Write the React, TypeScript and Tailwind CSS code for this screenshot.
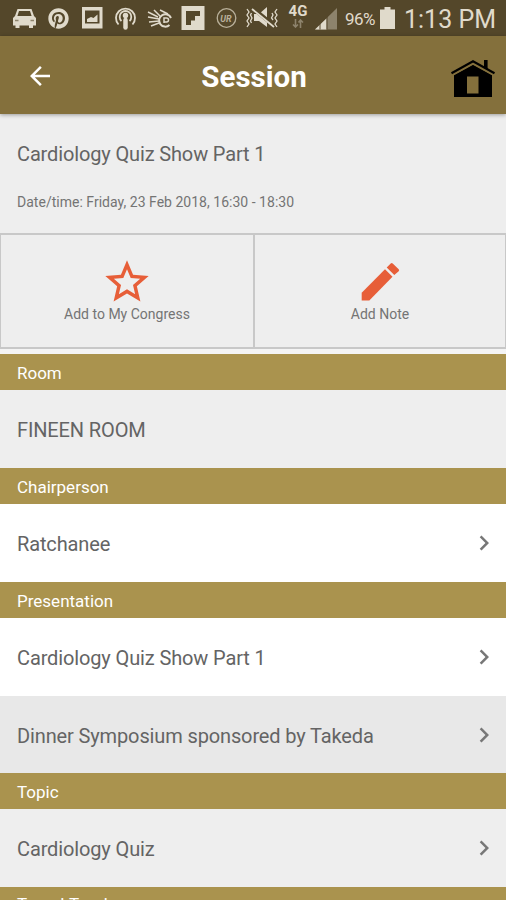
import React from "react";
import { MdArrowBack, MdStarBorder, MdChevronRight } from "react-icons/md";
import { FaPinterest } from "react-icons/fa";

const sections = [
  {
    title: "Room",
    cls: "leading-9 pt-[1px]",
    rows: [{ label: "FINEEN ROOM", cls: "h-[78px] bg-[#eeeeee]", link: false }],
  },
  {
    title: "Chairperson",
    cls: "leading-9 pt-[1px]",
    rows: [{ label: "Ratchanee", cls: "h-[78px] bg-white", link: true }],
  },
  {
    title: "Presentation",
    cls: "leading-9 pt-[1px]",
    rows: [
      { label: "Cardiology Quiz Show Part 1", cls: "h-[78px] bg-white", link: true },
      { label: "Dinner Symposium sponsored by Takeda", cls: "h-[77px] bg-[#e8e8e8]", link: true },
    ],
  },
  {
    title: "Topic",
    cls: "leading-9 pt-[1px]",
    rows: [{ label: "Cardiology Quiz", cls: "h-[78px] bg-[#eeeeee]", link: true }],
  },
  { title: "Travel Track", cls: "leading-[34px] tracking-[0.4px]", rows: [] },
];

function StatusBar() {
  return (
    <div className="h-9 shrink-0 bg-[#54472a] text-[#e0dacb] flex items-center pl-[12px] pr-[10px]">
      <svg width="268" height="36" viewBox="0 0 268 36" className="shrink-0" fill="none" stroke="currentColor">
        {/* car */}
        <path
          d="M5.500 9h14l2.500 7 2 2v7.500h-3V28h-4v-2.500H7.500V28h-4v-2.500H1V18l2-2zM7 11l-1.600 5h14.200L18 11z"
          fill="currentColor"
          fillRule="evenodd"
          stroke="none"
        />
        <path d="M3 20.500h3.500M18.500 20.500H22" stroke="#8d836c" strokeWidth="1.500" />
        <FaPinterest x={36} y={8} size={21} stroke="none" />
        {/* gallery */}
        <path d="M70 7h20.500v21.500H70zM73 10.500v13h14.500v-13z" fill="currentColor" fillRule="evenodd" stroke="none" />
        <path d="M75 22v-3l4-2 2.500 1 4-3.500V22z" fill="currentColor" stroke="none" />
        {/* podcast */}
        <path d="M106.500 24.500a9.500 9.500 0 1 1 14 0" strokeWidth="1.800" />
        <path d="M109.500 21a5.800 5.800 0 1 1 8 0" strokeWidth="1.800" />
        <circle cx="113.500" cy="15.500" r="2.700" fill="currentColor" stroke="none" />
        <path d="M113.500 20v7.500" strokeWidth="4.500" strokeLinecap="round" />
        {/* comet */}
        <path d="M159 18a6.200 6.200 0 1 0-1.500 7" strokeWidth="2" />
        <path d="M152 23v-5h2.500a2 2 0 0 1 0 4H152" strokeWidth="1.500" />
        <path d="M136 12l10 5M142 10l6 6M148 10l8 4M136 17l11 2M137 22l10-1M139 26l8-3" strokeWidth="1.500" />
        {/* flipboard */}
        <path d="M169.500 6h23v24h-23z" fill="currentColor" stroke="none" />
        <path d="M174 11h14v5h-5v4.500h-4V25h-5z" fill="#54472a" stroke="none" />
        {/* round badge */}
        <circle cx="214.500" cy="18" r="9.300" stroke="#b9b09a" strokeWidth="1.300" />
        <text x="214" y="21.500" textAnchor="middle" fontSize="9" fontStyle="italic" fontWeight="bold" fill="#b9b09a" stroke="none">
          UR
        </text>
        {/* vibrate / muted */}
        <path d="M242 14h5l8-7v20l-8-6h-5z" fill="currentColor" stroke="none" />
        <path d="M240 7.500l23 19" stroke="#54472a" strokeWidth="4" />
        <path d="M240 9l22 18" strokeWidth="1.800" />
        <path d="M235 9l2 3-2 3 2 3-2 3 2 3-2 3M239.500 13l-1 2 1.500 3-1.500 3 1 2M265 9l-2 3 2 3-2 3 2 3-2 3 2 3M260 13l1 2-1.500 3 1.500 2" strokeWidth="1.300" />
      </svg>
      <div className="w-[22px] ml-[7px] -mt-[4px] flex flex-col items-center shrink-0">
        <span className="text-[15px] leading-[15px] font-bold">4G</span>
        <svg width="12" height="9" viewBox="0 0 12 9" fill="none" stroke="#8d836c" strokeWidth="1.600">
          <path d="M3.500 0v8M1 5.500L3.500 8 6 5.500M8.500 9V1M6.500 3.500l2-2.500 2.500 2.500" />
        </svg>
      </div>
      <svg width="23" height="23" viewBox="0 0 23 23" className="ml-[6px] shrink-0">
        <path d="M0 22.500L22 1v21.500z" fill="#8d836c" />
        <path d="M0 22.500L11.500 11.500v11z" fill="currentColor" />
        <path d="M5 16.500v6M12 10v12.500" stroke="#54472a" strokeWidth="1" />
      </svg>
      <span className="ml-[7px] w-[35px] text-[17px] leading-none tracking-[-0.6px] pt-[2px] shrink-0">96%</span>
      <svg width="15" height="22" viewBox="0 0 15 22" className="mb-[1px] shrink-0">
        <path d="M4.500 0h6v2.500H15V22H0V2.500h4.500z" fill="currentColor" />
      </svg>
      <span className="ml-auto text-[25px] leading-none pt-[3px] whitespace-nowrap">1:13 PM</span>
    </div>
  );
}

function HomeIcon() {
  return (
    <svg width="46" height="40" viewBox="0 0 46 40">
      <path d="M4 16L23 5.500 42 16v22H4zM17 17.500v17h11.500v-17z" fill="#000" fillRule="evenodd" />
      <path d="M1.500 15L23 3.200 44.500 15" fill="none" stroke="#84703c" strokeWidth="4.500" />
      <path d="M1.500 14.200L23 2.200 44.500 14.200" fill="none" stroke="#000" strokeWidth="2.200" />
      <path d="M34 1h3.600v9.500l-3.600-2z" fill="#000" />
    </svg>
  );
}

function PencilIcon() {
  return (
    <svg width="52" height="52" viewBox="0 0 52 52" fill="#e75e38">
      <path d="M7.700 44.500v-7.800L31 13.200l7.500 7.500-23.200 23.800z" />
      <path d="M32.700 11.500l4-4q1-1 2 0l6 5.800q.9 1 0 2L40.300 19z" />
    </svg>
  );
}

export default function App() {
  return (
    <div className="w-[506px] h-[900px] overflow-hidden flex flex-col bg-[#eeeeee] text-[#646464] font-[Roboto,sans-serif]">
      <StatusBar />

      {/* App bar */}
      <div className="h-[78px] shrink-0 bg-[#84703c] flex items-center pl-[25px] pr-[10px] shadow-[0_1px_4px_rgba(0,0,0,0.35)]">
        <MdArrowBack size={30} className="text-white mt-[1px]" />
        <h1 className="flex-1 text-center text-white text-[29.5px] leading-none font-bold pl-[3px] pt-[5px]">
          Session
        </h1>
        <div className="mt-[8px]">
          <HomeIcon />
        </div>
      </div>

      {/* Session info */}
      <div className="h-[119px] shrink-0 pl-[17px] pt-[28px]">
        <p className="text-[20px] leading-6 tracking-[-0.14px]">Cardiology Quiz Show Part 1</p>
        <p className="mt-[26px] text-[14px] leading-5 tracking-[0.02px] text-[#747474]">
          Date/time: Friday, 23 Feb 2018, 16:30 - 18:30
        </p>
      </div>

      {/* Actions */}
      <div className="h-[116px] shrink-0 grid grid-cols-[254px_1fr] border-2 border-l-1 border-r-1 border-[#c8c8c8] text-[14px] text-[#747474]">
        <div className="flex flex-col items-center pt-[21px] border-r-2 border-[#c8c8c8]">
          <MdStarBorder size={52} className="text-[#e75e38]" />
          <span className="-mt-[4px] leading-5">Add to My Congress</span>
        </div>
        <div className="flex flex-col items-center pt-[21px]">
          <PencilIcon />
          <span className="-mt-[4px] leading-5">Add Note</span>
        </div>
      </div>

      <div className="h-[5px] shrink-0 bg-[#f4f4f4]" />

      {sections.map((section) => (
        <div key={section.title} className="shrink-0">
          <div className="h-9 bg-[#aa934e] text-white text-[17px] pl-[17px]">
            <div className={section.cls}>{section.title}</div>
          </div>
          {section.rows.map((row) => (
            <div key={row.label} className={`${row.cls} flex items-center justify-between pl-[17px] pr-[7px]`}>
              <span className="text-[20px] leading-6 tracking-[-0.13px] pt-[2px]">{row.label}</span>
              {row.link && <MdChevronRight size={30} className="text-[#777777]" />}
            </div>
          ))}
        </div>
      ))}
    </div>
  );
}
